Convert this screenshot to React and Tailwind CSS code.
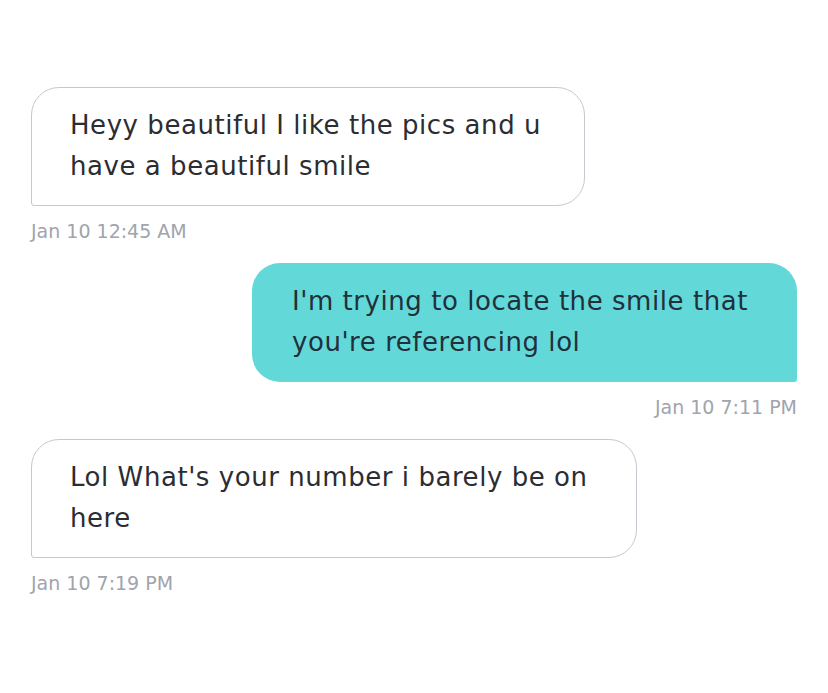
import React from 'react';

const messages = [
  { id: 1, mine: false, lines: ['Heyy beautiful I like the pics and u', 'have a beautiful smile'], time: 'Jan 10 12:45 AM', width: 'w-[554px]' },
  { id: 2, mine: true, lines: ["I'm trying to locate the smile that", "you're referencing lol"], time: 'Jan 10 7:11 PM', width: 'w-[545px]' },
  { id: 3, mine: false, lines: ["Lol What's your number i barely be on", 'here'], time: 'Jan 10 7:19 PM', width: 'w-[606px]' },
];

const App = () => {
  return (
    <div className="min-h-[693px] bg-white pt-[87px] px-[31px] font-['DejaVu_Sans',sans-serif]">
      {messages.map((msg) => (
        <div key={msg.id} className={`flex flex-col mb-[20px] ${msg.mine ? 'items-end' : 'items-start'}`}>
          {msg.mine ? (
            <div className={`${msg.width} bg-[#63d8d9] rounded-t-[28px] rounded-bl-[28px] rounded-br-[3px] pl-[40px] pr-[10px] pt-[18px] pb-[19px] text-[26px] leading-[41px] tracking-[0.55px] text-[#21303a] whitespace-nowrap`}>
              {msg.lines.map((l, i) => (
                <div key={i}>{l}</div>
              ))}
            </div>
          ) : (
            <div className={`${msg.width} bg-white border border-[#c5c8cf] rounded-t-[28px] rounded-br-[28px] rounded-bl-[3px] pl-[38px] pr-[10px] pt-[17px] pb-[18px] text-[26px] leading-[41px] tracking-[0.55px] text-[#2b2d33] whitespace-nowrap`}>
              {msg.lines.map((l, i) => (
                <div key={i}>{l}</div>
              ))}
            </div>
          )}
          <div className="mt-[13px] text-[19px] leading-[24px] text-[#a0a4ad]">{msg.time}</div>
        </div>
      ))}
    </div>
  );
};

export default App;
